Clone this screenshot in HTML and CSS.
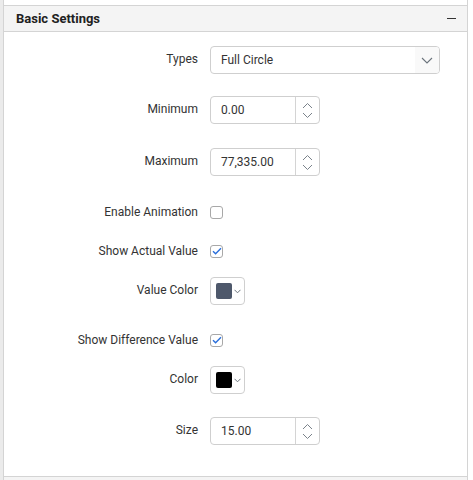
FILE: index.html
```html
<!DOCTYPE html>
<html>
<head>
<meta charset="utf-8">
<link rel="stylesheet" href="styles.css">
</head>
<body>
<div class="shell">
  <div class="panel">
    <div class="prev"></div>
    <div class="sec-header">
      <span class="sec-title">Basic Settings</span>
      <span class="collapse"></span>
    </div>
    <div class="sec-body">
      <div class="row r-types">
        <div class="label">Types</div>
        <div class="dropdown">
          <span class="dd-text">Full Circle</span>
          <span class="dd-icon"><svg width="12" height="7" viewBox="0 0 12 7"><path d="M1 1l5 5 5-5" fill="none" stroke="#6c757d" stroke-width="1.1"/></svg></span>
        </div>
      </div>
      <div class="row r-min">
        <div class="label">Minimum</div>
        <div class="spin">
          <span class="spin-text">0.00</span>
          <span class="spin-btns">
            <svg width="11" height="7" viewBox="0 0 11 7"><path d="M1 6l4.5-4.5L10 6" fill="none" stroke="#7a828a" stroke-width="1"/></svg>
            <svg width="11" height="7" viewBox="0 0 11 7"><path d="M1 1l4.5 4.5L10 1" fill="none" stroke="#7a828a" stroke-width="1"/></svg>
          </span>
        </div>
      </div>
      <div class="row r-max">
        <div class="label">Maximum</div>
        <div class="spin">
          <span class="spin-text">77,335.00</span>
          <span class="spin-btns">
            <svg width="11" height="7" viewBox="0 0 11 7"><path d="M1 6l4.5-4.5L10 6" fill="none" stroke="#7a828a" stroke-width="1"/></svg>
            <svg width="11" height="7" viewBox="0 0 11 7"><path d="M1 1l4.5 4.5L10 1" fill="none" stroke="#7a828a" stroke-width="1"/></svg>
          </span>
        </div>
      </div>
      <div class="row r-anim cb-row">
        <div class="label">Enable Animation</div>
        <span class="check"></span>
      </div>
      <div class="row r-actual cb-row">
        <div class="label">Show Actual Value</div>
        <span class="check"><svg width="10" height="8" viewBox="0 0 10 8"><path d="M1 4.2l2.6 2.6L9 1.2" fill="none" stroke="#2a6fdb" stroke-width="1.4"/></svg></span>
      </div>
      <div class="row r-vcolor">
        <div class="label">Value Color</div>
        <div class="colorbtn">
          <span class="swatch sw-slate"></span>
          <svg class="cp-arrow" width="7" height="5" viewBox="0 0 7 5"><path d="M0.5 0.8l3 3 3-3" fill="none" stroke="#6c757d" stroke-width="1"/></svg>
        </div>
      </div>
      <div class="row r-diff cb-row">
        <div class="label">Show Difference Value</div>
        <span class="check"><svg width="10" height="8" viewBox="0 0 10 8"><path d="M1 4.2l2.6 2.6L9 1.2" fill="none" stroke="#2a6fdb" stroke-width="1.4"/></svg></span>
      </div>
      <div class="row r-color">
        <div class="label">Color</div>
        <div class="colorbtn">
          <span class="swatch sw-black"></span>
          <svg class="cp-arrow" width="7" height="5" viewBox="0 0 7 5"><path d="M0.5 0.8l3 3 3-3" fill="none" stroke="#6c757d" stroke-width="1"/></svg>
        </div>
      </div>
      <div class="row r-size">
        <div class="label">Size</div>
        <div class="spin">
          <span class="spin-text">15.00</span>
          <span class="spin-btns">
            <svg width="11" height="7" viewBox="0 0 11 7"><path d="M1 6l4.5-4.5L10 6" fill="none" stroke="#7a828a" stroke-width="1"/></svg>
            <svg width="11" height="7" viewBox="0 0 11 7"><path d="M1 1l4.5 4.5L10 1" fill="none" stroke="#7a828a" stroke-width="1"/></svg>
          </span>
        </div>
      </div>
    </div>
    <div class="next-header"></div>
  </div>
</div>
</body>
</html>
```

FILE: styles.css
```css
* { box-sizing: border-box; }
html, body { margin: 0; padding: 0; background: #fff; }
body {
  font-family: Roboto, "Liberation Sans", sans-serif;
  font-size: 12px;
  color: #333;
}
.shell {
  width: 473px;
  height: 480px;
  border-left: 3px solid #ebebeb;
  overflow: hidden;
}
.panel {
  width: 465px;
  height: 480px;
  border-left: 1px solid #d4d4d4;
  border-right: 1px solid #d4d4d4;
  display: flex;
  flex-direction: column;
}
.prev { height: 5px; flex: none; }
.sec-header {
  flex: none;
  height: 27px;
  border-top: 1px solid #d4d4d4;
  border-bottom: 1px solid #d4d4d4;
  background: #f4f4f4;
  display: flex;
  align-items: center;
  justify-content: space-between;
  padding: 0 11px 0 12px;
}
.sec-title {
  font-weight: 700;
  font-size: 13px;
  color: #212121;
}
.collapse {
  width: 9px;
  height: 1.5px;
  background: #333;
}
.sec-body {
  flex: none;
  height: 444px;
  padding-top: 14px;
  display: flex;
  flex-direction: column;
}
.next-header {
  flex: 1;
  border-top: 1px solid #d4d4d4;
  background: #f4f4f4;
}
.row {
  display: flex;
  align-items: center;
  height: 28px;
  flex: none;
}
.r-min { margin-top: 22px; }
.r-max { margin-top: 24px; }
.r-anim { margin-top: 22px; }
.r-actual { margin-top: 11px; }
.r-vcolor { margin-top: 12px; }
.r-diff { margin-top: 21px; }
.r-color { margin-top: 12px; }
.r-size { margin-top: 23px; }
.label {
  width: 194px;
  text-align: right;
  margin-right: 12px;
  color: #333;
  padding-bottom: 2px;
}
.cb-row .label { padding-bottom: 0; }
.dropdown {
  width: 230px;
  height: 28px;
  border: 1px solid #cfcfcf;
  border-radius: 4px;
  display: flex;
  align-items: center;
  justify-content: space-between;
  overflow: hidden;
}
.dd-text { padding-left: 10px; color: #333; }
.dd-icon {
  width: 24px;
  height: 100%;
  background: #f9f9f9;
  display: flex;
  align-items: center;
  justify-content: center;
  padding-top: 1px;
}
.spin {
  width: 110px;
  height: 28px;
  border: 1px solid #cfcfcf;
  border-radius: 4px;
  display: flex;
  align-items: center;
}
.spin-text {
  flex: 1;
  padding-left: 10px;
  color: #333;
}
.spin-btns {
  width: 24px;
  height: 100%;
  border-left: 1px solid #d4d4d4;
  display: flex;
  flex-direction: column;
  align-items: center;
  justify-content: center;
  gap: 3px;
}
.check {
  width: 13px;
  height: 13px;
  border: 1px solid #a8a8a8;
  border-radius: 3px;
  background: #fff;
  display: flex;
  align-items: center;
  justify-content: center;
}
.colorbtn {
  width: 35px;
  height: 28px;
  border: 1px solid #cfcfcf;
  border-radius: 4px;
  display: flex;
  align-items: center;
  padding-left: 5px;
  gap: 2px;
}
.swatch {
  width: 16px;
  height: 16px;
  border-radius: 2px;
}
.sw-slate { background: #4e586b; }
.sw-black { background: #000; }
```
